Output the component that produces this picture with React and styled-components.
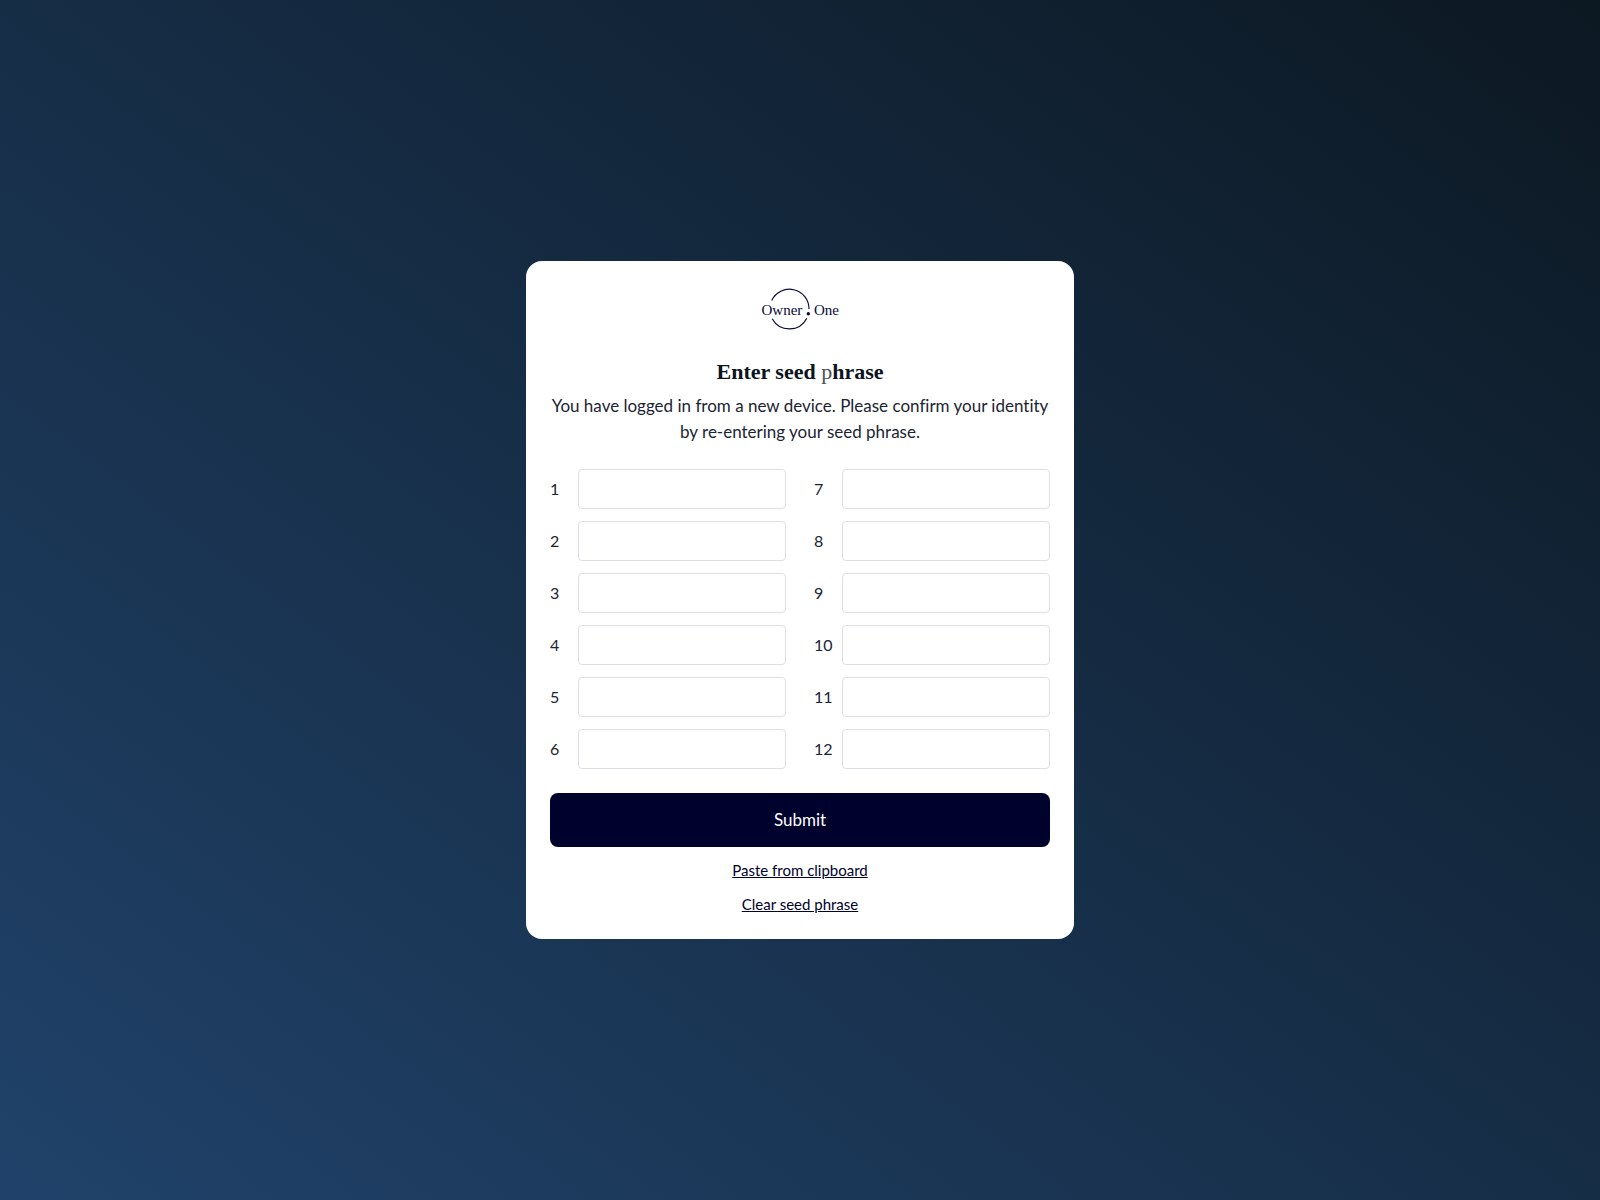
import React, { useState } from "react";
import styled, { createGlobalStyle } from "styled-components";

const GlobalStyle = createGlobalStyle`
  *, *::before, *::after { box-sizing: border-box; }
  body {
    margin: 0;
    font-family: Lato, "Liberation Sans", sans-serif;
    font-size: 17px;
    font-variant-ligatures: none;
    line-height: 26px;
    color: #1b2433;
  }
`;

const Page = styled.main`
  min-height: 100vh;
  display: flex;
  align-items: center;
  justify-content: center;
  padding: 24px;
  background: linear-gradient(to top right, #20426a, #0c1822);
`;

const Card = styled.form`
  width: 100%;
  max-width: 548px;
  padding: 24px 24px 18px;
  display: flex;
  flex-direction: column;
  align-items: center;
  background: #fff;
  border-radius: 16px;
`;

const Logo = styled.svg`
  width: 80px;
  height: 48px;
  margin-bottom: 24px;
  fill: #0a0a3c;
  font-family: "Liberation Serif", serif;
  font-size: 15px;
`;

const Title = styled.h1`
  margin: 0 0 6px;
  font-family: "Liberation Serif", serif;
  font-size: 22px;
  font-weight: 700;
  line-height: 30px;
  color: #0b1420;
`;

const LightLetter = styled.span`
  font-weight: 400;
  color: #4a4f5a;
`;

const Intro = styled.p`
  margin: 0 0 24px;
  text-align: center;
`;

const Words = styled.div`
  width: 100%;
  display: grid;
  grid-template-columns: repeat(2, minmax(0, 1fr));
  grid-template-rows: repeat(6, auto);
  grid-auto-flow: column;
  gap: 12px 28px;
  margin-bottom: 24px;
`;

const WordRow = styled.div`
  display: flex;
  align-items: center;
`;

const WordLabel = styled.label`
  flex: 0 0 28px;
  font-size: 16px;
`;

const WordInput = styled.input`
  flex: 1;
  min-width: 0;
  height: 40px;
  padding: 0 12px;
  border: 1px solid #dedfe5;
  border-radius: 4px;
  background: #fff;
  font: inherit;
  color: inherit;
`;

const SubmitButton = styled.button`
  width: 100%;
  height: 54px;
  margin-bottom: 6px;
  border: 0;
  border-radius: 8px;
  background: #00022e;
  color: #fff;
  font: inherit;
  cursor: pointer;
`;

const TextButton = styled.button`
  padding: 4px 0;
  border: 0;
  background: none;
  color: #00022e;
  font: inherit;
  font-size: 15px;
  text-decoration: underline;
  cursor: pointer;
`;

const WORD_COUNT = 12;
const emptyWords = () => Array(WORD_COUNT).fill("");

export default function App() {
  const [words, setWords] = useState(emptyWords);

  const setWord = (index, value) =>
    setWords((current) => current.map((w, i) => (i === index ? value : w)));

  const paste = async () => {
    const parts = (await navigator.clipboard.readText()).trim().split(/\s+/);
    setWords(emptyWords().map((_, i) => parts[i] || ""));
  };

  return (
    <>
      <GlobalStyle />
      <Page>
        <Card onSubmit={(e) => e.preventDefault()}>
          <Logo viewBox="0 0 80 48" role="img" aria-label="Owner.One">
            <g fill="none" stroke="#0a0a3c" strokeWidth="1.2">
              <path d="M11.7 15.4A19.6 19.6 0 0 1 49 24" />
              <path d="M12.2 33.8A19.6 19.6 0 0 0 46.8 33.2" />
            </g>
            <text x="1.5" y="30">Owner</text>
            <circle cx="48.3" cy="28.7" r="1.7" />
            <text x="54" y="30">One</text>
          </Logo>
          <Title>
            Enter seed <LightLetter>p</LightLetter>hrase
          </Title>
          <Intro>
            You have logged in from a new device. Please confirm your identity
            by re-entering your seed phrase.
          </Intro>
          <Words>
            {words.map((word, i) => (
              <WordRow key={i}>
                <WordLabel htmlFor={`word-${i + 1}`}>{i + 1}</WordLabel>
                <WordInput
                  id={`word-${i + 1}`}
                  type="text"
                  autoComplete="off"
                  value={word}
                  onChange={(e) => setWord(i, e.target.value)}
                />
              </WordRow>
            ))}
          </Words>
          <SubmitButton type="submit">Submit</SubmitButton>
          <TextButton type="button" onClick={paste}>
            Paste from clipboard
          </TextButton>
          <TextButton type="button" onClick={() => setWords(emptyWords())}>
            Clear seed phrase
          </TextButton>
        </Card>
      </Page>
    </>
  );
}
